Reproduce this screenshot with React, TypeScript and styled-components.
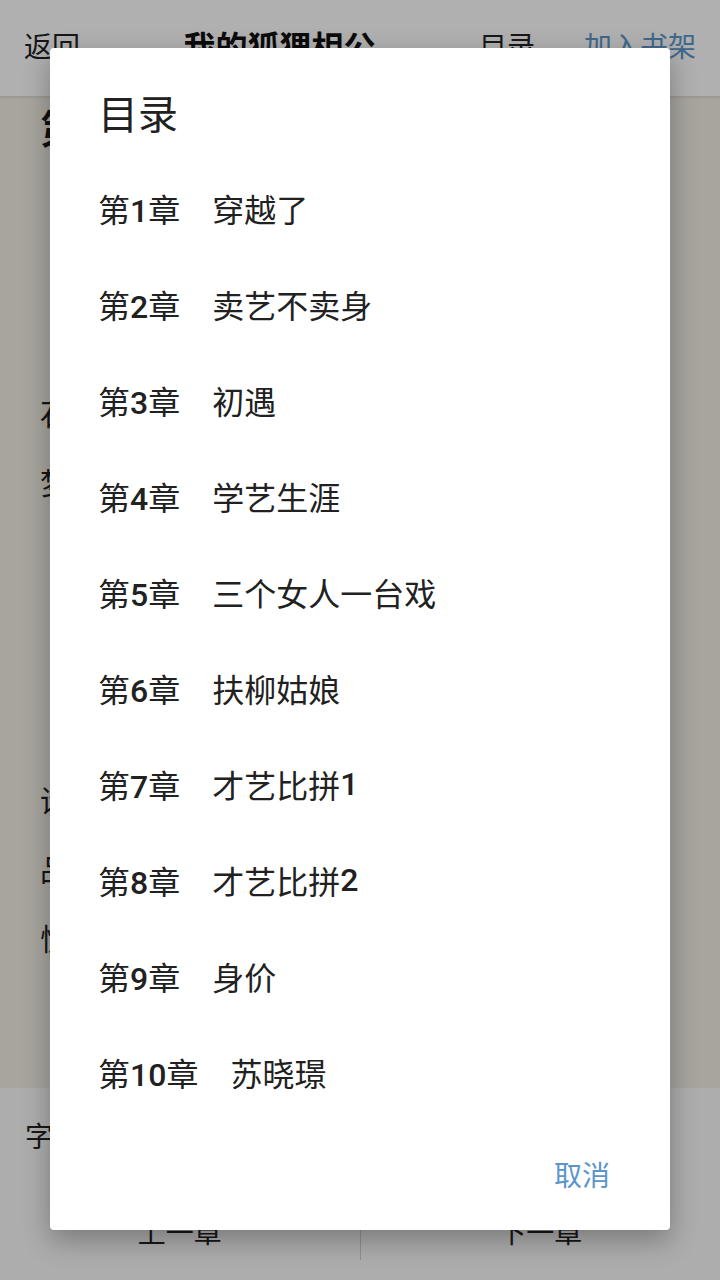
import React, { ReactElement } from 'react';
import styled, { createGlobalStyle } from 'styled-components';

const GlobalStyle = createGlobalStyle`
    html, body {
        margin: 0;
        padding: 0;
        width: 720px;
        height: 1280px;
        overflow: hidden;
        font-family: Roboto, "Noto Sans CJK SC", sans-serif;
        color: #212121;
    }
`;

const chapters = [
    '穿越了',
    '卖艺不卖身',
    '初遇',
    '学艺生涯',
    '三个女人一台戏',
    '扶柳姑娘',
    '才艺比拼1',
    '才艺比拼2',
    '身价',
    '苏晓璟',
];

const paragraphs = [
    { text: '天色渐暗，街上行人稀少。', gap: 0 },
    { text: '她揉了揉发酸的眼睛。', gap: 0 },
    { text: '黄昏时分的小院里飘着淡淡的花香，她坐在石阶上望着远处的山峦，感觉这一切都像一场梦，醒来却依旧身在此地。', gap: 0 },
    { text: '“姑娘，该用饭了。”', gap: 0 },
    { text: '她应了一声，起身。', gap: 0 },
    { text: '屋里点着一盏油灯，桌上摆着几碟小菜。是谁这样用心准备的呢？她愣了片刻，坐下来细细品尝，来到这里已经有些时日，却仍然不大习惯，不知道什么时候才能回去。', gap: 42 },
];

/**
 * Splits a chapter title so the latin digits can carry their own weight
 */
const renderTitle = (title: string): ReactElement[] =>
    title.split(/(\d+)/).filter(Boolean).map((part, i) =>
        /\d/.test(part) ? <Num key={i}>{part}</Num> : <span key={i}>{part}</span>
    );

/**
 * Reader page dimmed behind the chapter list dialog
 *
 * @returns {ReactElement}
 */
const App: React.FC = (): ReactElement => {
    return (
        <Page>
            <GlobalStyle />
            <TopBar>
                <BarText>返回</BarText>
                <BookTitle>我的狐狸相公</BookTitle>
                <BarText>目录</BarText>
                <BarText $accent>加入书架</BarText>
            </TopBar>
            <Content>
                <ChapterHeading>第1章 穿越了</ChapterHeading>
                {paragraphs.map((p, i) => (
                    <Para key={i} $gap={p.gap}>
                        {p.text}
                    </Para>
                ))}
            </Content>
            <BottomBar>
                <FontRow>
                    <BarText>字号</BarText>
                    <BarText>A-</BarText>
                    <BarText>A+</BarText>
                </FontRow>
                <NavRow>
                    <NavButton>上一章</NavButton>
                    <NavDivider />
                    <NavButton>下一章</NavButton>
                </NavRow>
            </BottomBar>

            <Overlay>
                <Dialog>
                    <DialogTitle>目录</DialogTitle>
                    <ChapterList>
                        {chapters.map((title, i) => (
                            <ChapterItem key={title}>
                                <ChapterNo>
                                    第<Num>{i + 1}</Num>章
                                </ChapterNo>
                                {renderTitle(title)}
                            </ChapterItem>
                        ))}
                    </ChapterList>
                    <DialogActions>
                        <TextButton>取消</TextButton>
                    </DialogActions>
                </Dialog>
            </Overlay>
        </Page>
    );
};

export default App;

const Page = styled.div`
    width: 720px;
    height: 1280px;
    display: flex;
    flex-direction: column;
    position: relative;
    overflow: hidden;
`;

const TopBar = styled.header`
    height: 96px;
    flex-shrink: 0;
    display: flex;
    align-items: center;
    padding: 0 24px;
    background: #fcfcfc;
    box-shadow: 0 1px 3px rgba(0, 0, 0, 0.12);
    box-sizing: border-box;
    z-index: 1;

    & > *:last-child {
        margin-left: 49px;
    }
`;

const BarText = styled.span<{ $accent?: boolean }>`
    font-size: 28px;
    line-height: 40px;
    color: ${({ $accent }) => ($accent ? '#5b95c9' : '#222')};
    white-space: nowrap;
`;

const BookTitle = styled.span`
    flex: 1;
    text-align: center;
    font-size: 32px;
    font-weight: 700;
    line-height: 40px;
    color: #111;
`;

const Content = styled.main`
    flex: 1;
    background: #f0ece2;
    padding: 0 40px;
    overflow: hidden;
    box-sizing: border-box;
`;

const ChapterHeading = styled.h1`
    margin: 0;
    font-size: 40px;
    font-weight: 700;
    line-height: 70px;
    padding-bottom: 7px;
    color: #1b1b1b;
`;

const Para = styled.p<{ $gap: number }>`
    margin: ${({ $gap }) => $gap}px 0 0;
    font-size: 30px;
    line-height: 69px;
    text-indent: 2em;
    color: #1f1f1f;
`;

const BottomBar = styled.footer`
    height: 192px;
    flex-shrink: 0;
    background: #f8f8f8;
    display: flex;
    flex-direction: column;
`;

const FontRow = styled.div`
    height: 100px;
    display: flex;
    align-items: center;
    gap: 60px;
    padding: 0 25px;
`;

const NavRow = styled.div`
    flex: 1;
    display: flex;
    align-items: center;
`;

const NavButton = styled.span`
    flex: 1;
    text-align: center;
    font-size: 28px;
    line-height: 40px;
    color: #222;
`;

const NavDivider = styled.div`
    width: 1px;
    height: 52px;
    background: #cfcfcf;
`;

const Overlay = styled.div`
    position: absolute;
    inset: 0;
    background: rgba(0, 0, 0, 0.3);
    display: flex;
    justify-content: center;
    align-items: flex-start;
    padding-top: 48px;
    z-index: 10;
`;

const Dialog = styled.div`
    width: 620px;
    background: #fff;
    border-radius: 4px;
    box-shadow: 0 10px 28px rgba(0, 0, 0, 0.3);
    display: flex;
    flex-direction: column;
`;

const DialogTitle = styled.h2`
    margin: 0;
    padding: 44px 48px 0;
    font-size: 40px;
    font-weight: 400;
    line-height: 48px;
    color: #212121;
`;

const ChapterList = styled.ul`
    list-style: none;
    margin: 20px 0 0;
    padding: 0;
`;

const ChapterItem = styled.li`
    height: 96px;
    display: flex;
    align-items: center;
    padding: 0 48px;
    font-size: 32px;
    color: #212121;
    white-space: nowrap;
`;

const ChapterNo = styled.span`
    margin-right: 32px;
`;

const Num = styled.span`
    font-weight: 500;
`;

const DialogActions = styled.div`
    display: flex;
    justify-content: flex-end;
    padding: 18px 44px 20px;
`;

const TextButton = styled.button`
    height: 72px;
    padding: 0 16px;
    border: none;
    background: none;
    font-family: Roboto, "Noto Sans CJK SC", sans-serif;
    font-size: 28px;
    color: #5b95c9;
`;
